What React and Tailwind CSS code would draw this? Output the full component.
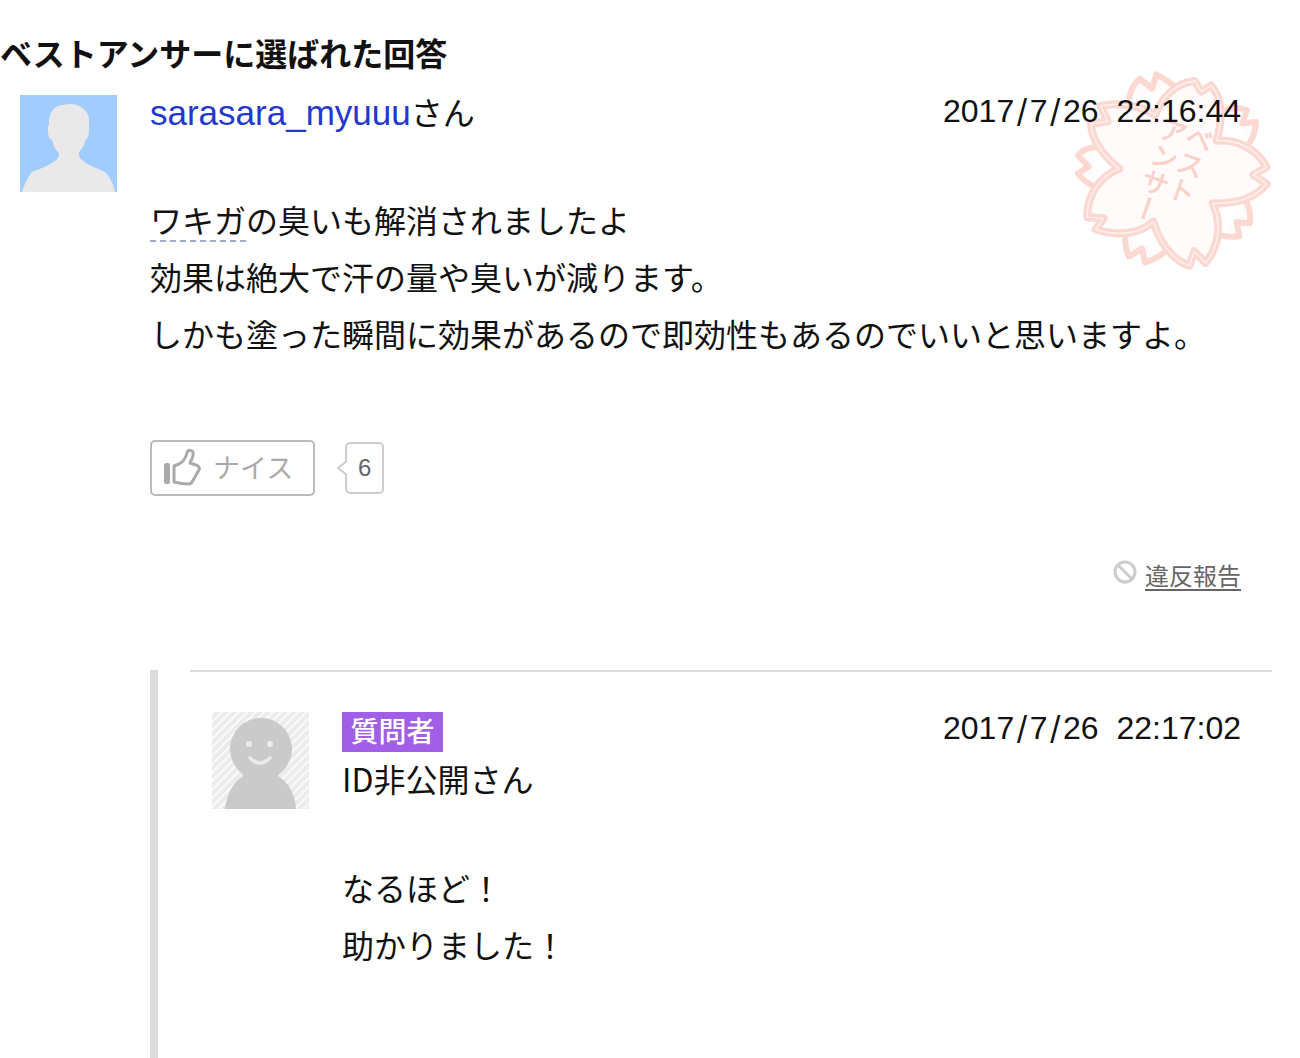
import React from "react";

function BestAnswerStamp() {
  const flower =
    "M285 165 C305 115 345 68 404 63 L424 95 L453 76 C484 110 491 170 470 242 C530 238 590 265 620 322 L580 344 L620 372 C585 415 530 432 458 430 C486 490 478 560 436 609 L403 574 L388 617 C335 600 298 545 280 485 C235 525 165 528 107 508 L131 475 L82 472 C80 410 115 350 178 326 C125 285 95 235 93 192 L143 184 L122 138 C175 126 240 135 285 165 Z";
  return (
    <svg
      viewBox="0 0 690 660"
      className="pointer-events-none absolute top-[60px] right-[10px] h-[220px] w-[230px]"
      fill="none"
      strokeLinejoin="round"
      strokeLinecap="round"
      aria-label="ベストアンサー"
    >
      <g stroke="#fbd8d1" strokeWidth="18" fill="#fffbfa">
        <path d="M208 112 Q215 75 240 56 L276 86 L289 43 Q320 58 345 80" />
        <path d="M500 150 Q530 138 560 151 L548 190 L588 186 Q586 222 570 246" />
        <path d="M102 262 Q70 265 54 287 L86 320 L54 340 Q72 366 104 380" />
        <path d="M560 428 Q574 455 569 490 L530 487 L538 529 Q512 533 484 526" />
        <path d="M196 532 Q193 562 207 590 L246 566 L255 607 Q285 600 312 578" />
      </g>
      <path d={flower} fill="#fffbfa" stroke="#fbd8d1" strokeWidth="24" />
      <path d={flower} stroke="#fff3f0" strokeWidth="4" />
      <g
        transform="translate(368 180) rotate(19)"
        fill="#fbd0c8"
        stroke="#fbd0c8"
        strokeWidth="2"
        fontSize="82"
        fontFamily='"Noto Sans CJK JP", sans-serif'
        style={{ writingMode: "vertical-rl" }}
      >
        <text x="-16" y="0">アンサー</text>
        <text x="66" y="-4">ベスト</text>
      </g>
    </svg>
  );
}

function UserAvatar() {
  return (
    <svg viewBox="0 0 97 97" className="size-[97px] shrink-0" aria-hidden="true">
      <path fill="#a1ccff" d="M0 0h97v97H0z" />
      <path
        fill="#e9e9e9"
        d="M2 97 C4 90 8 82 12 77 C22 73 33 69 38 63 Q40 60 38 57 C35 54 33 50 32 45 C29 44 28 40 28 36 V31 L29 30 V24 C31 15 36 10 43 10 Q50 8 57 10 C64 13 69 18 69 25 V35 C69 40 68 44 65 45 C65 50 62 54 59 57 Q58 60 60 63 C66 70 77 73 85 77 C90 82 94 90 95 97 Z"
      />
    </svg>
  );
}

function AnonymousAvatar() {
  return (
    <svg viewBox="0 0 97 97" className="size-[97px] shrink-0" aria-hidden="true">
      <defs>
        <pattern id="stripes" width="6" height="6" patternUnits="userSpaceOnUse" patternTransform="rotate(45)">
          <path fill="#ebebeb" d="M0 0h6v6H0z" />
          <path fill="#fafafa" d="M0 0h2v6H0z" />
        </pattern>
      </defs>
      <path fill="url(#stripes)" d="M0 0h97v97H0z" />
      <circle cx="49" cy="37" r="31" fill="#cacaca" />
      <path fill="#cacaca" d="M13 97 C15 82 21 70 31 64 L29 58 H69 L66 64 C77 71 83 82 84 97 Z" />
      <circle cx="37" cy="32" r="3" fill="#ebebeb" />
      <circle cx="58" cy="32" r="3" fill="#ebebeb" />
      <path d="M38 46 Q48 56 58 46" fill="none" stroke="#ebebeb" strokeWidth="3.5" strokeLinecap="round" />
    </svg>
  );
}

function ThumbIcon() {
  return (
    <svg viewBox="0 0 38 38" className="size-[38px]" fill="none" aria-hidden="true">
      <rect x="1" y="15" width="6" height="21" rx="2" fill="#aaa" />
      <path
        d="M11 18 L16 16 C20 14 23 9 24 5 C25 1 30 2 30 5 C31 9 28 12 27 15 L33 17 C36 18 37 20 36 22 L29 34 C28 36 27 36 25 36 C20 36 15 35 11 34 Z"
        stroke="#aaa"
        strokeWidth="3"
        strokeLinejoin="round"
      />
    </svg>
  );
}

function Slash() {
  return <span className="mx-0.5 font-['Inter'] leading-none">/</span>;
}

function DateTime({ year, month, day, time }) {
  return (
    <time className="relative h-8 font-['Liberation_Sans'] text-[32px] leading-8 whitespace-pre">
      {year}
      <Slash />
      {month}
      <Slash />
      {day + "  " + time}
    </time>
  );
}

export default function App() {
  return (
    <main
      lang="ja"
      className="relative flex min-h-screen flex-col bg-white pt-7 font-['Noto_Sans_CJK_JP',sans-serif] text-[32px] text-[#111]"
    >
      <BestAnswerStamp />
      <h1 className="leading-[48px] font-bold">ベストアンサーに選ばれた回答</h1>
      <article className="mt-[19px] flex gap-[33px] pl-5">
        <UserAvatar />
        <div className="min-w-0 flex-1">
          <div className="flex items-start justify-between pr-[59px]">
            <p className="h-8 leading-8">
              <a href="#user" className="font-['Liberation_Sans'] text-[35px] text-[#2238d0]">sarasara_myuuu</a>さん
            </p>
            <DateTime year="2017" month="7" day="26" time="22:16:44" />
          </div>
          <p className="mt-16 pr-[59px] leading-[57px]">
            <a href="#keyword" className="inline-block border-b-2 border-dashed border-[#9bb0c4] leading-[42px]">ワキガ</a>の臭いも解消されましたよ
            <br />
            効果は絶大で汗の量や臭いが減ります。
            <br />
            しかも塗った瞬間に効果があるので即効性もあるのでいいと思いますよ。
          </p>
          <div className="mt-[78px] flex items-center gap-[30px]">
            <button type="button" className="flex h-14 items-center gap-3 rounded-[5px] border-2 border-[#bbb] pr-5 pb-0.5 pl-[11px] text-[27px] text-[#aaa]">
              <ThumbIcon />
              ナイス
            </button>
            <span className="relative flex h-[52px] w-[39px] items-center justify-center rounded-[5px] border-2 border-[#ccc] font-['Liberation_Sans'] text-2xl text-[#666]">
              6
              <svg viewBox="0 0 12 16" className="absolute top-4 -left-[11px] h-4 w-3" aria-hidden="true">
                <path d="M11 1 L2 8 L11 15" fill="#fff" stroke="#ccc" strokeWidth="2" />
              </svg>
            </span>
          </div>
          <div className="mt-[61px] flex items-center justify-end gap-2 pr-[59px]">
            <svg viewBox="0 0 24 24" className="-mt-1.5 size-6" fill="none" stroke="#ccc" strokeWidth="3" aria-hidden="true">
              <circle cx="12" cy="12" r="10" />
              <path d="M5 5l14 14" />
            </svg>
            <a href="#report" className="text-2xl leading-9 text-[#666] underline decoration-2 underline-offset-4">違反報告</a>
          </div>
        </div>
      </article>
      <section className="mt-[77px] mr-7 ml-[150px] flex-1 border-l-8 border-[#ddd] pl-8">
        <div className="flex gap-[33px] border-t-2 border-[#ddd] pt-10 pl-[22px]">
          <AnonymousAvatar />
          <div className="min-w-0 flex-1">
            <div className="flex items-start justify-between pr-[31px]">
              <div>
                <span className="flex h-10 w-[101px] items-center justify-center bg-[#a15ee6] pb-1 text-[28px] font-medium text-white">質問者</span>
                <p className="mt-1.5 leading-10">ID非公開さん</p>
              </div>
              <DateTime year="2017" month="7" day="26" time="22:17:02" />
            </div>
            <p className="mt-[61px] leading-[57px]">
              なるほど！
              <br />
              助かりました！
            </p>
          </div>
        </div>
      </section>
    </main>
  );
}
